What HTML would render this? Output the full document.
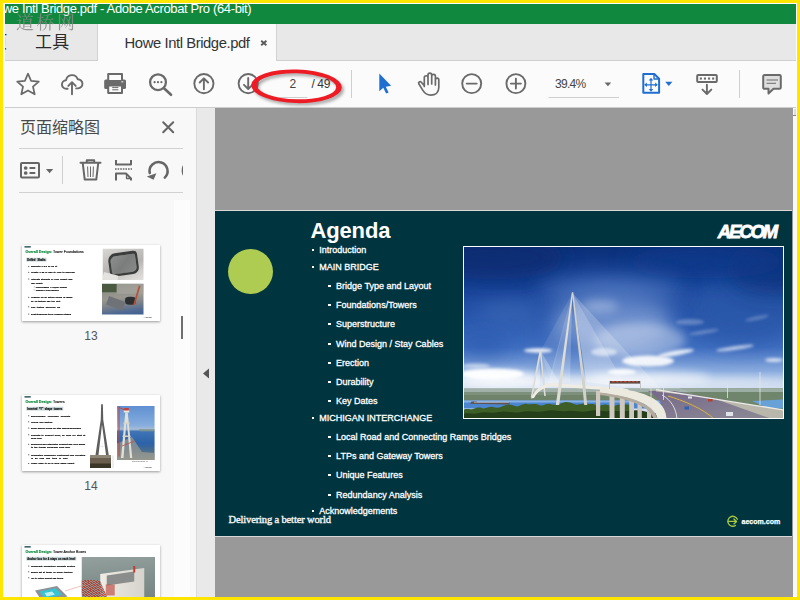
<!DOCTYPE html>
<html lang="zh">
<head>
<meta charset="utf-8">
<title>Howe Intl Bridge.pdf - Adobe Acrobat Pro (64-bit)</title>
<style>
*{margin:0;padding:0;box-sizing:border-box}
html,body{width:800px;height:600px;overflow:hidden;background:#fdfdfd}
body{font-family:"Liberation Sans","Noto Sans CJK SC",sans-serif;position:relative}
.a{position:absolute}
#frame{position:absolute;left:0;top:0;width:800px;height:600px;border:3px solid #ffe600;z-index:50;pointer-events:none}
#titlebar{position:absolute;left:5px;top:4px;width:791px;height:20px;background:#10893e;overflow:hidden}
#title{position:absolute;left:-18.15px;top:-5.3px;color:#fff;font-size:13px;letter-spacing:-.355px;line-height:20px;white-space:nowrap}
#wm{position:absolute;left:16px;top:9.5px;font-family:"Noto Serif CJK SC","Noto Sans CJK SC",serif;font-size:18px;font-weight:400;line-height:22px;color:#888;letter-spacing:2.5px;opacity:.85;white-space:nowrap;z-index:5}
#tabbar{position:absolute;left:5px;top:24px;width:791px;height:36px;background:#e8e8e8;overflow:hidden}
#tabline{position:absolute;left:5px;top:60px;width:791px;height:1px;background:#cfcfcf}
#tab{position:absolute;left:97px;top:24px;width:180px;height:37px;background:#fbfbfb;border-left:1px solid #d2d2d2;border-right:1px solid #d2d2d2}
#toolbar{position:absolute;left:5px;top:61px;width:791px;height:46px;background:#fbfbfb}
#tbline{position:absolute;left:5px;top:107px;width:791px;height:1px;background:#cdcdcd}
#panel{position:absolute;left:5px;top:108px;width:192px;height:489px;background:#f8f8f8;border-right:1px solid #d9d9d9;overflow:hidden}
#gutter{position:absolute;left:197px;top:108px;width:18px;height:489px;background:#e9e9e9}
#doc{position:absolute;left:215px;top:108px;width:578px;height:489px;background:#999}
#rstrip{position:absolute;left:793px;top:108px;width:4px;height:489px;background:#f8f8f8}
#slide{position:absolute;left:215px;top:210px;width:577px;height:327px;background:#00353f;border-top:1px solid #d9d7d7;border-bottom:1px solid #d9d7d7;overflow:hidden;color:#fff}
/* bullets */
.b{position:absolute;font-size:9px;line-height:12px;color:#fff;white-space:nowrap;-webkit-text-stroke:.3px #fff}
.b:before{content:"";position:absolute;top:5px;width:2.4px;height:2.2px;background:#fff}
.l1{left:319.2px}.l1:before{left:-7.7px}
.l2{left:336.1px}.l2:before{left:-7.7px}
/* thumbs */
.th{position:absolute;left:22px;width:138px;height:76px;background:#fff;box-shadow:0 1px 2.5px rgba(0,0,0,.38);overflow:hidden}
.ti{position:absolute;left:0;top:0;width:552px;height:304px;transform:scale(.25);transform-origin:0 0;color:#111;font-weight:bold}
.ti .dash{position:absolute;left:10px;top:5px;width:25px;height:5px;background:#063a42}
.ti .tt{position:absolute;left:14px;top:17px;font-size:14.5px;line-height:20px;font-weight:normal;white-space:nowrap;text-align:justify;text-align-last:justify;-webkit-text-stroke:.6px #222}
.ti .tt b{color:#0c8a3c;-webkit-text-stroke:.6px #0c8a3c}
.ti .hl{position:absolute;font-size:10.5px;line-height:15px;padding:0 4px;background:#c3d3d6;white-space:nowrap;text-align:justify;text-align-last:justify;-webkit-text-stroke:.55px #111}
.ti .q{position:absolute;font-size:9px;line-height:14px;white-space:nowrap;text-align:justify;text-align-last:justify;-webkit-text-stroke:.8px #111;overflow:visible}
.ti .s{font-size:8.4px}
.ti .d{position:absolute;display:block;border-radius:50%;background:#111}
.ti .cap{position:absolute;font-size:6px;line-height:8px;color:#444;white-space:nowrap;font-weight:normal}
.ti .ph{position:absolute;overflow:hidden}
.ti .ph i{position:absolute;display:block}
.ti .lg{position:absolute;left:482px;top:285px;font-size:8px;line-height:12px;color:#555;white-space:nowrap;font-style:italic}
.ti .lg span{color:#8db53c;font-style:normal}
</style>
</head>
<body>
<div id="titlebar"><div id="title">Howe Intl Bridge.pdf - Adobe Acrobat Pro (64-bit)</div></div>
<div id="tabbar"><div class="a" id="home" style="left:-31.5px;top:8px;font-size:17px;line-height:22px;color:#333;white-space:nowrap">主页</div></div>
<div id="tabline"></div>
<div id="tab"></div>
<div id="wm">道桥网</div>
<div id="toolbar"></div>
<div id="tbline"></div>
<div id="panel"></div>
<div id="gutter"></div>
<div id="doc"></div>
<div id="rstrip"></div>
<div id="slide"></div>
<!-- TAB BAR TEXT -->
<div class="a" id="tools" style="left:35px;top:32px;font-size:17px;line-height:22px;color:#2b2b2b;white-space:nowrap;letter-spacing:.3px">工具</div>
<div class="a" id="tabname" style="left:124.6px;top:32px;font-size:14.8px;letter-spacing:-.42px;line-height:22px;color:#333;white-space:nowrap">Howe Intl Bridge.pdf</div>
<!-- TOOLBAR TEXT -->
<div class="a" id="pgnum" style="left:289.5px;top:75px;font-size:12px;line-height:18px;color:#444;white-space:nowrap">2</div>
<div class="a" id="pgtot" style="left:311.5px;top:75px;font-size:12px;line-height:18px;color:#333;white-space:nowrap;letter-spacing:-.4px">/ 49</div>
<div class="a" id="zoomv" style="left:555px;top:75px;font-size:12px;line-height:18px;color:#444;white-space:nowrap;letter-spacing:-.7px">39.4%</div>
<!-- ICON LAYER -->
<svg class="a" id="icons" style="left:0;top:0" width="800" height="600" viewBox="0 0 800 600" fill="none" stroke-linecap="round" stroke-linejoin="round">
 <g stroke="#6a6a6a" stroke-width="1.9">
  <!-- tab close -->
  <path d="M261.2 40.7l5.2 4.5m0-4.5l-5.2 4.5" stroke="#5a5a5a" stroke-width="1.9" stroke-linecap="butt"/>
  <!-- star -->
  <path d="M28.0 73.7 L31.1 80.8 L38.8 81.6 L33.0 86.7 L34.7 94.3 L28.0 90.4 L21.3 94.3 L23.0 86.7 L17.2 81.6 L24.9 80.8z" stroke-width="1.7"/>
  <!-- cloud upload -->
  <path d="M67.6 88.8h-1.2a4.3 4.3 0 0 1-.3-8.6a6 6 0 0 1 11.6-1a4.6 4.6 0 0 1 .3 9.2h-1.8"/>
  <path d="M72 94.2V82.6m-3.7 3.3L72 82.2l3.7 3.7"/>
  <!-- printer -->
  <rect x="104.2" y="79.4" width="21.8" height="9.6" rx="1.6" fill="#6a6a6a" stroke="none"/>
  <rect x="108.2" y="74" width="13.8" height="7" fill="#fbfbfb" stroke-width="2"/>
  <rect x="108.2" y="85.4" width="13.8" height="7.6" fill="#fbfbfb" stroke-width="2"/>
  <path d="M112.2 87.6h6.2m-6.2 2.2h6.2" stroke-width="1" stroke-linecap="butt"/>
  <rect x="121.3" y="81.2" width="2" height="1.2" fill="#ddd" stroke="none"/>
  <!-- search -->
  <circle cx="158" cy="82.2" r="7.9" stroke-width="2.3"/>
  <path d="M164 88.2l7 6.6" stroke-width="2.6"/>
  <g fill="#6a6a6a" stroke="none"><circle cx="154.6" cy="82.2" r="1.1"/><circle cx="158" cy="82.2" r="1.1"/><circle cx="161.4" cy="82.2" r="1.1"/></g>
  <!-- up / down -->
  <circle cx="203.9" cy="83.6" r="9.6"/>
  <path d="M203.9 89.3V78.4m-4.2 4.1l4.2-4.2 4.2 4.2"/>
  <circle cx="248.2" cy="83.6" r="9.6"/>
  <path d="M248.2 78V88.9m-4.2-4.1l4.2 4.2 4.2-4.2"/>
  <!-- hand -->
  <path d="M424.3 86.5V77.6a1.85 1.85 0 0 1 3.7 0V84.5M428 84V74.9a1.85 1.85 0 0 1 3.7 0V84M431.7 84V76.2a1.85 1.85 0 0 1 3.7 0V85M435.4 85V79.9a1.7 1.7 0 0 1 3.4 0V87.5c0 5.2-3.6 7.6-8 7.6-4 0-6.1-1.7-8.1-5l-3.9-6.3c-.9-1.6 1.3-2.9 2.5-1.5l3 3.5" stroke-width="1.7"/>
  <!-- zoom out / in -->
  <circle cx="471.7" cy="83.6" r="9.5"/><path d="M466.7 83.6h10"/>
  <circle cx="515.9" cy="83.6" r="9.5"/><path d="M510.9 83.6h10m-5-5v10"/>
  <!-- keyboard down -->
  <rect x="697.2" y="75.1" width="19.6" height="6.8" rx="1" stroke-width="2"/>
  <g fill="#6a6a6a" stroke="none"><rect x="699.8" y="77.5" width="2.1" height="2.1"/><rect x="703.9" y="77.5" width="2.1" height="2.1"/><rect x="708" y="77.5" width="2.1" height="2.1"/><rect x="712.1" y="77.5" width="2.1" height="2.1"/></g>
  <path d="M706.9 84.8v9m-4.4-4.2l4.4 4.4 4.4-4.4"/>
  <!-- comment -->
  <path d="M764.5 75h15a1.3 1.3 0 0 1 1.3 1.3v11.2a1.3 1.3 0 0 1-1.3 1.3h-6l-5 4.7v-4.7h-4a1.3 1.3 0 0 1-1.3-1.3v-11.2a1.3 1.3 0 0 1 1.3-1.3z" fill="#dedede" stroke-width="2"/>
  <path d="M766.5 80h11.5m-11.5 3.3h9.5" stroke-width="1" stroke-linecap="butt"/>
 </g>
 <!-- carets -->
 <path d="M604.6 82.4h6.6l-3.3 3.8z" fill="#666"/>
 <path d="M665.2 81.8h7.2l-3.6 4.2z" fill="#1f6fd0"/>
 <!-- select cursor -->
 <path d="M379.3 73.6V91.2l4-3.5 2.8 5.9 2.5-1.2-2.8-5.7 5.3-.9z" fill="#1f6fd0"/>
 <!-- fit page icon -->
 <g stroke="#1f6fd0" stroke-width="2">
  <path d="M643.3 74h11l4.8 4.8v14h-15.8z" stroke-linejoin="round"/>
  <path d="M654 74v5h5" stroke-width="1.4"/>
  <path d="M651 79.5v10.6m-5.3-5.3h10.6" stroke-width="1.2"/>
 </g>
 <g fill="#1f6fd0"><path d="M651 77.8l2.3 2.7h-4.6z"/><path d="M651 91.8l2.3-2.7h-4.6z"/><path d="M644.2 84.8l2.7-2.3v4.6z"/><path d="M657.8 84.8l-2.7-2.3v4.6z"/></g>
 <!-- separators & underlines -->
 <g stroke="#cfcfcf" stroke-width="1" stroke-linecap="butt">
  <path d="M351.5 70v28M739.5 70v28"/>
  <path d="M279.5 97.5h28M548.5 97.5h70.5"/>
 </g>
 <!-- red annotation -->
 <g transform="rotate(1.5 296.5 86.3)" fill-rule="evenodd" stroke="none">
  <path d="M251.2 86.3a45.3 16.8 0 1 0 90.6 0a45.3 16.8 0 1 0-90.6 0zM256.8 86.3a39.7 13 0 1 1 79.4 0a39.7 13 0 1 1-79.4 0z" fill="#555" fill-opacity=".5" transform="translate(2.2 2.4)" style="filter:blur(1.4px)"/>
  <path d="M251.2 86.3a45.3 16.8 0 1 0 90.6 0a45.3 16.8 0 1 0-90.6 0zM256.8 86.3a39.7 13 0 1 1 79.4 0a39.7 13 0 1 1-79.4 0z" fill="#ec1b24"/>
 </g>
</svg>
<!-- PANEL -->
<div class="a" id="ptitle" style="left:20px;top:117px;font-size:16px;line-height:22px;color:#4a4a4a;white-space:nowrap">页面缩略图</div>
<div class="a" style="left:19px;top:148px;width:164px;height:1px;background:#d2d2d2"></div>
<div class="a" style="left:19px;top:192px;width:164px;height:1px;background:#d2d2d2"></div>
<div class="a" id="strack" style="left:174px;top:200px;width:16px;height:397px;background:#fcfcfc"></div>
<div class="a" style="left:181px;top:316px;width:2px;height:23px;background:#6f6f6f"></div>
<svg class="a" style="left:0;top:100px" width="220" height="300" viewBox="0 100 220 300" fill="none" stroke="#666" stroke-width="2" stroke-linecap="butt" stroke-linejoin="round">
 <path d="M163.2 122.2l10 10m0-10l-10 10" stroke-linecap="round"/>
 <!-- options -->
 <rect x="21" y="163.1" width="18" height="14.4" rx="1"/>
 <circle cx="25.7" cy="168" r="1.85" fill="#666" stroke="none"/><circle cx="25.7" cy="173" r="1.85" fill="#666" stroke="none"/>
 <path d="M29.5 168h5.8m-5.8 5h5.8" stroke-width="1.8"/>
 <path d="M46 169h7.2l-3.6 4.2z" fill="#666" stroke="none"/>
 <path d="M62.5 156v28" stroke="#cfcfcf" stroke-width="1"/>
 <!-- trash -->
 <path d="M80.5 162.8h20M86.8 162.5v-2.3h7.4v2.3M82.8 163.5l1.9 16h11.6l1.9-16" stroke-linecap="round"/>
 <path d="M87.6 166.5l.4 10.5m2.5-10.5v10.5m2.9-10.5l-.4 10.5" stroke-width="1"/>
 <!-- page break -->
 <path d="M116 160v4.6h15v-4.6M116 180.5v-7h10l5 5v2"/>
 <path d="M126.5 174v4.5h4.5" stroke-width="1.3" fill="none"/>
 <path d="M115 169h17" stroke-width="1.6" stroke-dasharray="1.6 1"/>
 <!-- rotate -->
 <path d="M164.8 177.6a9 9 0 1 0-15-4.5" stroke-width="2.5" stroke-linecap="round"/>
 <path d="M146.8 176.6l9.6-3.4-2.8 6.6z" fill="#666" stroke="none"/>
 <path d="M186 163.5a9.5 9.5 0 0 0 0 14" stroke-width="2.6"/><rect x="183" y="160" width="13" height="22" fill="#f8f8f8" stroke="none"/>
 <!-- collapse arrow -->
 <path d="M203 373.5l6-5v10z" fill="#555" stroke="none"/>
</svg>
<div class="a lbl" style="left:71px;top:327px;width:40px;text-align:center;font-size:12px;line-height:18px;color:#555">13</div>
<div class="a lbl" style="left:71px;top:477px;width:40px;text-align:center;font-size:12px;line-height:18px;color:#555">14</div>
<div class="a" style="left:794px;top:109px;width:2px;height:6px;background:#dcdcdc"></div>
<div class="a" style="left:793px;top:115px;width:3px;height:1px;background:#8d857c"></div>
<!-- THUMBNAILS -->
<div class="th" style="top:245px">
 <div class="ti">
  <div class="dash"></div>
  <div class="tt" style="width:226px"><b>Overall Design:</b> Tower Foundations</div>
  <div class="hl" style="left:17px;top:51px;width:81px">Drilled Shafts</div>
  <i class="d" style="left:25px;top:84px;width:4px;height:4px"></i><div class="q" style="left:36px;top:79px;width:105px">Diameter = 3.0 m (10 ft)</div><i class="d" style="left:25px;top:107px;width:4px;height:4px"></i><div class="q" style="left:36px;top:102px;width:176px">Length = 36 m (120 ft) (min to bedrock)</div><i class="d" style="left:25px;top:134px;width:4px;height:4px"></i><div class="q" style="left:36px;top:129px;width:166px">Ultimate strength of rock socket and</div><div class="q" style="left:36px;top:145px;width:48px">(per shaft):</div><i class="d" style="left:47px;top:166px;width:3px;height:3px"></i><div class="q s" style="left:55px;top:160px;width:124px">Compression = 72,000 kN/mm</div><i class="d" style="left:47px;top:178px;width:3px;height:3px"></i><div class="q s" style="left:55px;top:173px;width:91px">Tension = 4700 mm/ms</div><i class="d" style="left:25px;top:207px;width:4px;height:4px"></i><div class="q" style="left:36px;top:202px;width:166px">Loading for all action codes is raised</div><div class="q" style="left:36px;top:216px;width:117px">by lid testing call top foot</div><i class="d" style="left:25px;top:245px;width:4px;height:4px"></i><div class="q" style="left:36px;top:240px;width:117px">Geo testing performs log</div><i class="d" style="left:25px;top:274px;width:4px;height:4px"></i><div class="q" style="left:36px;top:269px;width:160px">Post-tensioned tie-in dynamic straps</div>
  <div class="ph" style="left:323px;top:15px;width:163px;height:125px;background:linear-gradient(160deg,#d9d8d5 0%,#c4c3c0 30%,#b5b4b0 55%,#d2d1cd 80%,#e2e1de 100%)"><i style="left:24px;top:14px;width:118px;height:92px;background:linear-gradient(135deg,#8e908f,#7a7d7c 50%,#8a8c8a);border:9px solid #3b3d3d;border-top-width:12px;border-radius:30px 16px 26px 18px;transform:rotate(-8deg)"></i><i style="left:0;top:100px;width:60px;height:30px;background:#e4e3e0;transform:rotate(14deg)"></i></div>
  <div class="ph" style="left:320px;top:155px;width:166px;height:123px;background:linear-gradient(172deg,#6f7a6c 0%,#8f9189 25%,#9a9890 45%,#7d8289 65%,#4f6a92 85%,#3f5f93 100%)"><i style="left:0;top:0;width:58px;height:34px;background:#4a5a40"></i><i style="left:60px;top:0;width:106px;height:40px;background:#a6a59e;opacity:.7"></i><i style="left:92px;top:52px;width:44px;height:32px;background:#2d3033;border-radius:40%"></i><i style="left:20px;top:60px;width:70px;height:36px;background:#6f7378;transform:rotate(20deg)"></i><i style="left:136px;top:6px;width:7px;height:80px;background:#b4533c;transform:rotate(16deg)"></i></div>
  <div class="lg"><span>◔</span> AECOM</div>
 </div>
</div>
<div class="th" style="top:395px">
 <div class="ti">
  <div class="dash"></div>
  <div class="tt" style="width:154px"><b>Overall Design:</b> Towers</div>
  <div class="hl" style="left:17px;top:47px;width:148px">Inverted “Y” shape towers</div>
  <i class="d" style="left:25px;top:81px;width:4px;height:4px"></i><div class="q" style="left:36px;top:76px;width:157px">Economically reinforced concrete</div><i class="d" style="left:25px;top:105px;width:4px;height:4px"></i><div class="q" style="left:36px;top:100px;width:86px">Hollow box section</div><i class="d" style="left:25px;top:130px;width:4px;height:4px"></i><div class="q" style="left:36px;top:125px;width:200px">Small anchor boxes for stay cables anchorage</div><i class="d" style="left:25px;top:157px;width:4px;height:4px"></i><div class="q" style="left:36px;top:152px;width:217px">Pedestal to support deck, no need for strut at</div><div class="q" style="left:36px;top:164px;width:44px">deck level</div><i class="d" style="left:25px;top:195px;width:4px;height:4px"></i><div class="q" style="left:36px;top:190px;width:217px">Simplified and integrated concept and look ahead</div><div class="q" style="left:36px;top:203px;width:157px">to the typical cross-way deck level</div><i class="d" style="left:25px;top:237px;width:4px;height:4px"></i><div class="q" style="left:36px;top:232px;width:217px">Completely accessible (instrument and elevators</div><div class="q" style="left:36px;top:244px;width:148px">in all legs and tops of pier)</div><i class="d" style="left:25px;top:272px;width:4px;height:4px"></i><div class="q" style="left:36px;top:267px;width:173px">Tower fixes to be in legs’ damp height</div>
  <svg style="position:absolute;left:268px;top:34px" width="104" height="266" viewBox="0 0 104 266">
   <rect x="4" y="206" width="84" height="52" fill="#6a5e4e"/><rect x="4" y="206" width="84" height="12" fill="#8d8676"/><rect x="4" y="240" width="84" height="18" fill="#3a3526"/>
   <path d="M48.5 3h7l1.5 62 22 141h-11L52 84 38 206H26L47 65z" fill="#5e5e5e"/>
   <path d="M-4 6v250M96 208v50" stroke="#aaa" stroke-width="1.5" fill="none"/>
   <path d="M44 172h18M53 166v12" stroke="#ccc" stroke-width="1"/>
  </svg>
  <svg style="position:absolute;left:380px;top:44px" width="151" height="216" viewBox="0 0 151 216">
   <defs><linearGradient id="t14" x1="0" y1="0" x2="0" y2="1"><stop offset="0" stop-color="#5f90d2"/><stop offset=".36" stop-color="#86aedd"/><stop offset=".43" stop-color="#a9bdd6"/><stop offset=".47" stop-color="#3f74b6"/><stop offset=".7" stop-color="#2c62a8"/><stop offset=".84" stop-color="#4d6f8c"/><stop offset="1" stop-color="#8c938a"/></linearGradient></defs>
   <rect width="151" height="216" fill="url(#t14)"/>
   <path d="M0 150l60-26 40 60 51 4v28H0z" fill="#9a9a90" opacity=".75"/>
   <path d="M88 92h63v10H92z" fill="#7f9488" opacity=".7"/>
   <path d="M8 2v200M8 6l24 10" stroke="#c0453a" stroke-width="4" fill="none"/>
   <path d="M33 26h10l18 182h-9L40 70h-3L26 208h-10z" fill="#e3dfd4"/>
   <path d="M26 66h24v7H26zM22 118h32v6H22z" fill="#d8d3c6"/>
   <path d="M29 8h18v12H29z" fill="#c8402f"/><path d="M27 18h22v8H27z" fill="#ece8dd"/>
   <path d="M20 160l50-20" stroke="#c0453a" stroke-width="3"/>
  </svg>
  <div class="cap" style="left:440px;top:262px">Stonecutters Bridge, HK</div>
  <div class="lg"><span>◔</span> AECOM</div>
 </div>
</div>
<div class="th" style="top:545px">
 <div class="ti">
  <div class="dash"></div>
  <div class="tt" style="width:239px"><b>Overall Design:</b> Tower Anchor Boxes</div>
  <div class="hl" style="left:17px;top:47px;width:200px">Anchor box for 4 stays on each level</div>
  <i class="d" style="left:25px;top:82px;width:4px;height:4px"></i><div class="q" style="left:36px;top:77px;width:176px">Composite connection concrete section</div><i class="d" style="left:25px;top:105px;width:4px;height:4px"></i><div class="q" style="left:36px;top:100px;width:167px">Boxes set at tower by panel together</div><i class="d" style="left:25px;top:129px;width:4px;height:4px"></i><div class="q" style="left:36px;top:124px;width:129px">Up to lifting weight 180 tonne</div>
  <div class="ph" style="left:239px;top:48px;width:293px;height:200px;background:linear-gradient(175deg,#93a09d 0%,#84928f 40%,#71807f 100%)"><i style="left:74px;top:56px;width:176px;height:150px;background:linear-gradient(90deg,#efece6,#d6d3cc);transform:skewY(-8deg)"></i><i style="left:100px;top:66px;width:110px;height:40px;background:#8a8d8b;transform:skewY(-8deg)"></i><i style="left:0;top:92px;width:96px;height:110px;background:repeating-linear-gradient(45deg,#b8392d 0 5px,#8f9a98 5px 9px);opacity:.85;transform:skewX(24deg)"></i><i style="left:96px;top:110px;width:36px;height:44px;background:#b8392d;opacity:.6"></i><i style="left:206px;top:36px;width:8px;height:26px;background:#c23c2e"></i></div>
  <svg style="position:absolute;left:40px;top:150px" width="220" height="80" viewBox="0 0 220 80"><path d="M12 32l88-18 42 42-100 22z" fill="#8c9298"/><path d="M30 36l64-13 26 26-68 16z" fill="#35c4d2"/><path d="M50 42l30-6 12 12-32 8z" fill="#bfeef2"/><path d="M132 34L215 8" stroke="#d88a78" stroke-width="2"/></svg>
 </div>
</div>
<!-- SLIDE CONTENT -->
<div class="a" style="left:228px;top:249px;width:45px;height:45px;border-radius:50%;background:#aecb52"></div>
<div class="a" id="agenda" style="left:310.5px;top:216.5px;font-size:22px;letter-spacing:-.15px;line-height:28px;font-weight:bold;color:#fff;white-space:nowrap">Agenda</div>
<div id="bl">
<div class="b l1" style="top:244px">Introduction</div>
<div class="b l1" style="top:261px">MAIN BRIDGE</div>
<div class="b l2" style="top:280px">Bridge Type and Layout</div>
<div class="b l2" style="top:299px">Foundations/Towers</div>
<div class="b l2" style="top:318px">Superstructure</div>
<div class="b l2" style="top:338px">Wind Design / Stay Cables</div>
<div class="b l2" style="top:357px">Erection</div>
<div class="b l2" style="top:376px">Durability</div>
<div class="b l2" style="top:395px">Key Dates</div>
<div class="b l1" style="top:412px">MICHIGAN INTERCHANGE</div>
<div class="b l2" style="top:431px">Local Road and Connecting Ramps Bridges</div>
<div class="b l2" style="top:450px">LTPs and Gateway Towers</div>
<div class="b l2" style="top:469px">Unique Features</div>
<div class="b l2" style="top:489px">Redundancy Analysis</div>
<div class="b l1" style="top:505px">Acknowledgements</div>
</div>
<div class="a" id="deliver" style="left:228.5px;top:513px;font-family:'Liberation Serif',serif;font-size:10.5px;line-height:14px;color:#f2f2f2;white-space:nowrap;letter-spacing:-.14px;-webkit-text-stroke:.4px #f2f2f2">Delivering a better world</div>
<div class="a" id="aecom" style="left:717.8px;top:221px;font-size:18.5px;line-height:22px;font-weight:bold;font-style:italic;color:#fff;white-space:nowrap;letter-spacing:-2.1px;-webkit-text-stroke:.8px #fff">AECOM</div>
<div class="a" id="aecomcom" style="left:741.5px;top:515.5px;font-size:7.05px;line-height:12px;font-weight:bold;color:#fff;white-space:nowrap;-webkit-text-stroke:.25px #fff">aecom.com</div>
<svg class="a" style="left:724px;top:513px" width="18" height="17" viewBox="724 513 18 17" fill="none" stroke="#a9c93f" stroke-width="1.3" stroke-linecap="round" stroke-linejoin="round">
 <path d="M737.4 519.2a5 5 0 1 0-1.9 6.3"/>
 <path d="M728 521.4h8.6m-2.7-2.5l2.7 2.5-2.7 2.5"/>
</svg>
<!-- BRIDGE PHOTO -->
<svg class="a" id="photo" style="left:463px;top:246px" width="321" height="173" viewBox="463 246 321 173">
 <defs>
  <linearGradient id="sky" gradientUnits="userSpaceOnUse" x1="0" y1="247" x2="0" y2="390">
   <stop offset="0" stop-color="#0b3079"/><stop offset=".22" stop-color="#143e92"/><stop offset=".48" stop-color="#2755ab"/><stop offset=".7" stop-color="#3f6ec0"/><stop offset=".88" stop-color="#8fafe0"/><stop offset="1" stop-color="#d4dff0"/>
  </linearGradient>
  <linearGradient id="road" x1="0" y1="0" x2="1" y2="1"><stop offset="0" stop-color="#76688a"/><stop offset="1" stop-color="#8d8c95"/></linearGradient>
  <filter id="b1" x="-30%" y="-80%" width="160%" height="260%"><feGaussianBlur stdDeviation="1.6"/></filter>
  <filter id="b2" x="-30%" y="-60%" width="160%" height="220%"><feGaussianBlur stdDeviation="5"/></filter>
  <filter id="b3" x="-30%" y="-60%" width="160%" height="220%"><feGaussianBlur stdDeviation="10"/></filter>
  <clipPath id="pc"><rect x="464" y="247" width="319" height="171"/></clipPath>
 </defs>
 <rect x="463" y="246" width="321" height="173" fill="#fff"/>
 <g clip-path="url(#pc)">
  <rect x="463" y="246" width="321" height="173" fill="url(#sky)"/>
  <!-- tonal areas -->
  <ellipse cx="495" cy="258" rx="70" ry="22" fill="#092b70" filter="url(#b3)" opacity=".75"/>
  <ellipse cx="740" cy="310" rx="55" ry="34" fill="#2b59a9" filter="url(#b3)" opacity=".8"/><ellipse cx="772" cy="268" rx="46" ry="26" fill="#0b337c" filter="url(#b3)" opacity=".75"/>
  <ellipse cx="706" cy="262" rx="80" ry="16" fill="#113a8d" filter="url(#b3)" opacity=".7"/>
  <ellipse cx="612" cy="322" rx="60" ry="30" fill="#7f9dd4" filter="url(#b3)" opacity=".8"/>
  <ellipse cx="612" cy="291" rx="72" ry="15" fill="#4d76c0" filter="url(#b3)" opacity=".75"/>
  <ellipse cx="510" cy="312" rx="34" ry="10" fill="#456fba" filter="url(#b3)" opacity=".6"/>
  <ellipse cx="483" cy="345" rx="26" ry="12" fill="#2252aa" filter="url(#b3)" opacity=".55"/>
  <ellipse cx="560" cy="383" rx="110" ry="6" fill="#e9eff7" filter="url(#b2)" opacity=".95"/>
  <ellipse cx="720" cy="383" rx="80" ry="5" fill="#dfe8f4" filter="url(#b2)" opacity=".9"/>
  <!-- clouds -->
  <g fill="#fff">
   <ellipse cx="492" cy="374" rx="32" ry="5.5" filter="url(#b1)" opacity=".95"/>
   <ellipse cx="476" cy="366" rx="14" ry="2.5" filter="url(#b1)" opacity=".5"/>
   <ellipse cx="538" cy="350.5" rx="14" ry="2.2" filter="url(#b1)" opacity=".9"/>
   <ellipse cx="648" cy="361" rx="26" ry="5.5" filter="url(#b1)" opacity=".9"/>
   <ellipse cx="676" cy="353" rx="18" ry="2.5" filter="url(#b1)" opacity=".85" transform="rotate(-10 676 353)"/>
   <ellipse cx="622" cy="372" rx="14" ry="3" filter="url(#b1)" opacity=".9"/>
   <ellipse cx="604" cy="352" rx="13" ry="4" filter="url(#b1)" opacity=".55"/>
   <ellipse cx="735" cy="348" rx="19" ry="1.8" filter="url(#b1)" opacity=".7" transform="rotate(-8 735 348)"/>
   <ellipse cx="704" cy="332" rx="15" ry="1.8" filter="url(#b1)" opacity=".28" transform="rotate(-9 704 332)"/>
   <ellipse cx="690" cy="322" rx="14" ry="3" filter="url(#b1)" opacity=".25"/>
   <ellipse cx="757" cy="318" rx="12" ry="1.8" filter="url(#b1)" opacity=".25" transform="rotate(-12 757 318)"/>
   <ellipse cx="774" cy="360" rx="9" ry="2" filter="url(#b1)" opacity=".7"/>
   <ellipse cx="640" cy="340" rx="46" ry="17" filter="url(#b2)" opacity=".36"/><ellipse cx="495" cy="379" rx="46" ry="8" filter="url(#b2)" opacity=".75"/><ellipse cx="650" cy="378" rx="60" ry="7" filter="url(#b2)" opacity=".6"/>
   <ellipse cx="600" cy="306" rx="18" ry="6" filter="url(#b2)" opacity=".3"/>
  </g>
  <!-- land, water, trees -->
  <rect x="463" y="388.5" width="321" height="13" fill="#7d907c"/>
  <rect x="463" y="388.5" width="321" height="3.5" fill="#a7b6b2" opacity=".85"/>
  <rect x="463" y="395" width="200" height="5" fill="#66795f" opacity=".6"/>
  <rect x="463" y="400.5" width="200" height="8" fill="#4b84cf"/>
  <rect x="463" y="400.5" width="200" height="2" fill="#86b2e6"/>
  <path d="M470 403.8l1.5-2.3h5l1 1h32v2z" fill="#5d5452"/>
  <path d="M474 402.3h35" stroke="#c9c3bb" stroke-width=".700"/>
  <path d="M463 419v-9c4-2 7 0 10-1s5-2 9-1 7-2 11-1 6 1 10-1 8-2 12 0 7-3 12-2 8-1 12 1 7-2 11-1 8 1 12-1 8-1 12 1 7-1 10 0 8-1 12 1 8-2 12 0 6 1 9 0 9-1 14 0v14z" fill="#3d5f27"/>
  <path d="M463 419v-5c6-2 10 1 16-1s12 1 20-1 14 2 22 0 16 1 24-1 15 1 22 0 14 2 22 0 14 1 20 0 10 1 18 0 14-1 20 1 12 0 20 0v8z" fill="#243f19"/>
  <!-- right side land/water -->
  <path d="M680 388.5h104v31h-24z" fill="#70866c"/>
  <path d="M680 388.5h104v3.5h-104z" fill="#a7b6b2" opacity=".8"/>
  <path d="M752 401l32-1.5v9l-18-1z" fill="#68a0d8"/>
  <!-- cable fans -->
  <g fill="#fff">
   <path d="M572.4 293L548 384l22-2z" opacity=".2"/>
   <path d="M572.4 293L540.5 351l10 30z" opacity=".1"/>
   <path d="M572.4 293l14 89 76 8.5z" opacity=".2"/>
   <path d="M572.4 293l14 89 40 5z" opacity=".2"/>
   <path d="M540.4 350.6l-8.5 44 8-8z" opacity=".3"/>
   <path d="M540.4 350.6l5 33 14-1z" opacity=".25"/>
  </g>
  <!-- far tower -->
  <path d="M540.4 350.6L531.5 397.5M540.4 350.6L545 396" stroke="#dedcd6" stroke-width="1.6" fill="none"/>
  <!-- main deck (far part) -->
  <path d="M531 398.5c3.5-9 10.5-14.5 21.5-15.5l70 5 6 1.5v3l-8-1.5-68-4.5c-9 .5-15 5-18.5 11.5z" fill="#eeece4"/>
  <!-- main tower -->
  <path d="M571.8 292.5h1.4L559.2 405h-3.4z" fill="#dddcd6"/>
  <path d="M572 292.5h1.3L585 383l2.2 22h-3l-2.1-22z" fill="#d2d1ca"/>
  <!-- piers -->
  <g fill="#cfc8c0">
   <rect x="596" y="391" width="4.2" height="25"/><rect x="609.5" y="393" width="5" height="26"/><rect x="619.8" y="395" width="5" height="24"/><rect x="629.2" y="397" width="4.8" height="22"/><rect x="637.5" y="398" width="4.3" height="21"/><rect x="647" y="401" width="4.3" height="18"/>
  </g>
  <!-- road -->
  <path d="M648 391h26l110 20v8h-119c0-12-5-21-17-28z" fill="url(#road)"/>
  <!-- right barrier -->
  <path d="M656 389.7l128 20.3v9h-12l-58-20.5-58-7z" fill="#b9b6ac"/>
  <path d="M656 389.7l128 20.3" stroke="#ecebe6" stroke-width="1.3" fill="none"/>
  <!-- near curved barrier / deck -->
  <path d="M600 386.8c32 2 66 8 66.5 32.2h-9c-1.5-13-22-22-57.5-26z" fill="#ece9df"/>
  <path d="M600 392.5c34 4 55 13 57.5 26.5h-4c-3-12-22-20-53.5-24z" fill="#b3ab9d"/>
  <path d="M668 396c14 4 36 13 46 23" stroke="#dcb43c" stroke-width="1" fill="none"/>
  <path d="M662 395c9 5 14 13 15 24" stroke="#e8e6df" stroke-width=".900" fill="none"/>
  <!-- gantry, poles, cars -->
  <path d="M610 381h30v2.6h-30z" fill="#5a4a44"/><path d="M612 381.7h26" stroke="#b8503c" stroke-width="1.2" stroke-dasharray="2.5 1.5"/><path d="M609.5 381v8M640.5 381v9" stroke="#bbb" stroke-width=".800"/>
  <path d="M760 372v33M727.5 384v14M651 386v22M663.5 388v12" stroke="#e4e4e4" stroke-width=".800"/>
  <rect x="708" y="399" width="4.5" height="2.5" fill="#b5402f"/><rect x="684.5" y="406.5" width="4.5" height="3" fill="#2d62b8"/><rect x="726" y="412" width="7" height="4" fill="#dfe2e6"/><rect x="688" y="396.5" width="4" height="2" fill="#e6e6e6"/>
 </g>
</svg>

<div id="frame"></div>
</body>
</html>
